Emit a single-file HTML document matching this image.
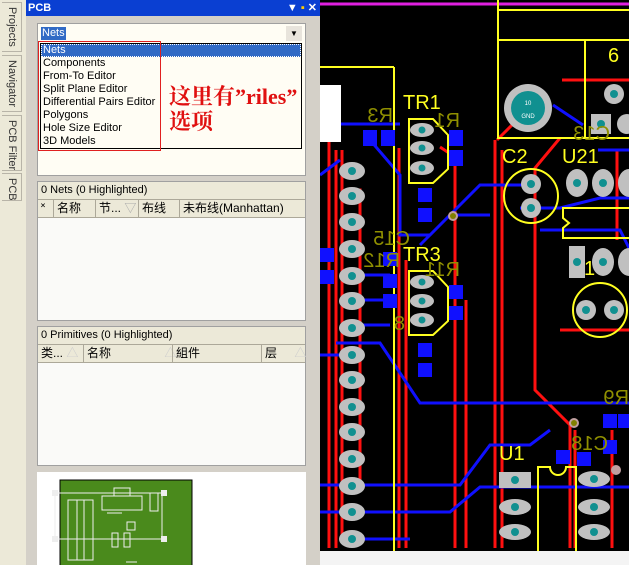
<!DOCTYPE html>
<html><head><meta charset="utf-8"><style>
*{margin:0;padding:0;box-sizing:border-box}
body{width:629px;height:565px;overflow:hidden;position:relative;background:#d4d0c8;font-family:"Liberation Sans","Noto Sans CJK SC",sans-serif;font-size:11px;color:#000}
.a{position:absolute}
.tab{position:absolute;left:2px;width:20px;background:#ece9d8;border:1px solid #b8b4a8;border-left:none}
.tab span{position:absolute;left:4px;top:4px;writing-mode:vertical-rl;font-size:11px;color:#333;white-space:nowrap}
.hdr{background:#ece9d8;border-bottom:1px solid #aca899}
.col{position:absolute;top:0;height:17px;line-height:17px;border-left:1px solid #aca899;padding-left:3px;white-space:nowrap}
</style></head><body>
<div class="a" style="left:0;top:0;width:26px;height:565px;background:#ece9d8"></div>
<div class="tab" style="top:2px;height:50px"><span>Projects</span></div>
<div class="tab" style="top:55px;height:57px"><span>Navigator</span></div>
<div class="tab" style="top:115px;height:56px"><span>PCB Filter</span></div>
<div class="tab" style="top:173px;height:28px"><span>PCB</span></div>
<div class="a" style="left:26px;top:0;width:294px;height:565px;background:#d4d0c8"></div>
<div class="a" style="left:26px;top:0;width:294px;height:16px;background:#0a3fd2;color:#fff;font-weight:bold;font-size:11px;line-height:16px;padding-left:2px">PCB<span style="position:absolute;right:3px;top:0;font-size:11px">▼ <span style="color:#fc0">▪</span> ✕</span></div>
<div class="a" style="left:37px;top:23px;width:269px;height:153px;background:#fffdf4;border:1px solid #a0a0a0"></div>
<div class="a" style="left:38px;top:26px;width:264px;height:16px;background:#fffdf4"></div>
<div class="a" style="left:41px;top:27px;height:13px;background:#316ac5;color:#fff;line-height:13px;padding:0 1px">Nets</div>
<div class="a" style="left:286px;top:26px;width:16px;height:15px;background:#e8e4dc;font-size:8px;text-align:center;line-height:15px">▼</div>
<div class="a" style="left:40px;top:43px;width:262px;height:106px;background:#fffdf4;border:1px solid #000;font-size:11px;line-height:13px">
<div style="background:#316ac5;color:#fff;padding-left:2px;outline:1px dotted #fff;outline-offset:-1px">Nets</div>
<div style="padding-left:2px">Components</div><div style="padding-left:2px">From-To Editor</div><div style="padding-left:2px">Split Plane Editor</div><div style="padding-left:2px">Differential Pairs Editor</div><div style="padding-left:2px">Polygons</div><div style="padding-left:2px">Hole Size Editor</div><div style="padding-left:2px">3D Models</div></div>
<div class="a" style="left:38px;top:41px;width:123px;height:110px;border:1px solid #e02020"></div>
<div class="a" style="left:169px;top:84px;color:#e01010;font-size:22px;line-height:25px;font-weight:bold;font-family:'Liberation Serif','Noto Serif CJK SC',serif;white-space:nowrap">这里有”riles”<br>选项</div>
<div class="a" style="left:37px;top:181px;width:269px;height:140px;background:#fafaf8;border:1px solid #a0a0a0">
<div class="hdr" style="height:18px;line-height:17px;padding-left:3px">0 Nets (0 Highlighted)</div>
<div class="hdr" style="height:18px;position:relative;font-size:12px">
<div class="col" style="left:0;border:none">˟</div><div class="col" style="left:15px">名称</div><div class="col" style="left:57px">节... <span style="color:#aaa">▽</span></div><div class="col" style="left:100px">布线</div><div class="col" style="left:141px">未布线(Manhattan)</div></div></div>
<div class="a" style="left:37px;top:326px;width:269px;height:140px;background:#fafaf8;border:1px solid #a0a0a0">
<div class="hdr" style="height:18px;line-height:17px;padding-left:3px">0 Primitives (0 Highlighted)</div>
<div class="hdr" style="height:18px;position:relative;font-size:12px">
<div class="col" style="left:0;border:none">类... <span style="color:#ccc">△</span></div><div class="col" style="left:45px">名称 <span style="color:#ccc;margin-left:50px">△</span></div><div class="col" style="left:134px">組件</div><div class="col" style="left:223px">层 <span style="color:#ccc;margin-left:14px">△</span></div></div></div>
<div class="a" style="left:37px;top:472px;width:269px;height:93px;background:#fff"></div>
<svg class="a" style="left:52px;top:478px" width="145" height="87">
<rect x="8" y="2" width="132" height="90" fill="#4a8a1c" stroke="#000"/>
<g stroke="#eee" fill="none" stroke-width="1">
<line x1="2" y1="15" x2="115" y2="15"/><line x1="2" y1="61" x2="115" y2="61"/>
<line x1="3" y1="15" x2="3" y2="61"/><line x1="110" y1="15" x2="110" y2="61"/>
<rect x="16" y="22" width="16" height="60"/><rect x="25" y="22" width="16" height="60"/>
<rect x="50" y="18" width="40" height="14"/><rect x="62" y="10" width="16" height="8"/>
<rect x="75" y="44" width="8" height="8"/><rect x="98" y="15" width="8" height="18"/>
<line x1="55" y1="35" x2="70" y2="35"/><rect x="60" y="55" width="6" height="14"/><rect x="72" y="55" width="6" height="14"/>
<line x1="74" y1="84" x2="85" y2="84"/></g>
<rect x="0" y="12" width="6" height="6" fill="#eee"/><rect x="0" y="58" width="6" height="6" fill="#eee"/><rect x="109" y="12" width="6" height="6" fill="#eee"/><rect x="109" y="58" width="6" height="6" fill="#eee"/>
</svg>
<svg class="a" style="left:320px;top:0" width="309" height="565" viewBox="320 0 309 565">
<rect x="320" y="0" width="309" height="565" fill="#000"/>
<rect x="320" y="551" width="309" height="14" fill="#f4f4f4"/>
<line x1="320" y1="4" x2="629" y2="4" stroke="#e020e0" stroke-width="3"/>
<g stroke="#ff1010" stroke-width="3" fill="none">
<line x1="329" y1="135" x2="329" y2="548"/><line x1="336" y1="150" x2="336" y2="548"/>
<path d="M342 150 V540 M350 190 h10 v300"/>
<line x1="399" y1="148" x2="399" y2="548"/><line x1="406" y1="260" x2="406" y2="548"/>
<path d="M440 147 l15 10 V548"/><line x1="466" y1="300" x2="466" y2="548"/>
<line x1="495" y1="140" x2="495" y2="548"/><line x1="502" y1="150" x2="502" y2="548"/>
<path d="M560 138 l-25 30 V390 l35 35 V548"/><path d="M575 430 V548 M612 430 V548"/>
<path d="M562 80 h67 M617 150 V240 M560 330 h69"/>
<path d="M497 140 l30 -30"/>
</g>
<g stroke="#1010ff" stroke-width="3" fill="none">
<path d="M320 175 l20 -15 M340 124 h60 M370 140 l30 35 v60 h30 l20 -20 h40 M420 245 l60 -60 h60"/>
<path d="M320 355 h30 M336 343 h20 M350 343 h30 l40 60 h209"/>
<path d="M320 485 h140 l30 -40 h40 l20 -15 M320 512 h130 l30 -25 h149 M350 539 h60"/>
<path d="M520 208 h40 l40 -10 h29 M540 230 h80 l10 20 M598 150 h31 M583 125 l-30 -20"/>
<path d="M350 275 h40 M350 300 h40 M360 325 h30"/>
</g>
<g stroke="#ffff20" stroke-width="2" fill="none">
<path d="M394 67 H320 M394 67 V551 M498 10 H629 M498 10 V138 H629 M498 40 H629 M585 40 V138 M498 0 v10"/>
<path d="M409 119 h24 l15 16 v34 l-15 14 h-24 z"/><path d="M409 271 h24 l15 16 v34 l-15 14 h-24 z"/>
<circle cx="531" cy="196" r="27"/><circle cx="600" cy="310" r="27"/>
<path d="M629 208 h-66 v10 l6 5 -6 5 v10 h66"/>
<path d="M538 551 V467 h12 a8 8 0 0 0 16 0 h10 V551"/>
</g>
<rect x="320" y="85" width="21" height="57" fill="#fff"/>
<g fill="#c0c0c0">
<ellipse cx="352" cy="171" rx="13" ry="9"/><ellipse cx="352" cy="196" rx="13" ry="9"/><ellipse cx="352" cy="222" rx="13" ry="9"/><ellipse cx="352" cy="249" rx="13" ry="9"/><ellipse cx="352" cy="276" rx="13" ry="9"/><ellipse cx="352" cy="301" rx="13" ry="9"/><ellipse cx="352" cy="328" rx="13" ry="9"/><ellipse cx="352" cy="355" rx="13" ry="9"/><ellipse cx="352" cy="380" rx="13" ry="9"/><ellipse cx="352" cy="407" rx="13" ry="9"/><ellipse cx="352" cy="432" rx="13" ry="9"/><ellipse cx="352" cy="459" rx="13" ry="9"/><ellipse cx="352" cy="486" rx="13" ry="9"/><ellipse cx="352" cy="512" rx="13" ry="9"/><ellipse cx="352" cy="539" rx="13" ry="9"/>
<ellipse cx="422" cy="130" rx="12" ry="7"/><ellipse cx="422" cy="148" rx="12" ry="7"/><ellipse cx="422" cy="168" rx="12" ry="7"/>
<ellipse cx="422" cy="282" rx="12" ry="7"/><ellipse cx="422" cy="301" rx="12" ry="7"/><ellipse cx="422" cy="320" rx="12" ry="7"/>
<circle cx="528" cy="108" r="24"/><circle cx="531" cy="184" r="10"/><circle cx="531" cy="208" r="10"/>
<circle cx="586" cy="310" r="10"/><circle cx="614" cy="310" r="10"/>
<ellipse cx="577" cy="183" rx="11" ry="14"/><ellipse cx="603" cy="183" rx="11" ry="14"/><ellipse cx="629" cy="183" rx="11" ry="14"/>
<rect x="569" y="246" width="16" height="32"/><ellipse cx="603" cy="262" rx="11" ry="14"/><ellipse cx="629" cy="262" rx="11" ry="14"/>
<circle cx="614" cy="94" r="10"/><rect x="591" y="114" width="20" height="20"/><circle cx="627" cy="124" r="10"/>
<rect x="499" y="472" width="32" height="16"/><ellipse cx="515" cy="507" rx="16" ry="8"/><ellipse cx="515" cy="532" rx="16" ry="8"/>
<ellipse cx="594" cy="479" rx="16" ry="8"/><ellipse cx="594" cy="507" rx="16" ry="8"/><ellipse cx="594" cy="532" rx="16" ry="8"/>
</g>
<g fill="#109090">
<circle cx="352" cy="171" r="4"/><circle cx="352" cy="196" r="4"/><circle cx="352" cy="222" r="4"/><circle cx="352" cy="249" r="4"/><circle cx="352" cy="276" r="4"/><circle cx="352" cy="301" r="4"/><circle cx="352" cy="328" r="4"/><circle cx="352" cy="355" r="4"/><circle cx="352" cy="380" r="4"/><circle cx="352" cy="407" r="4"/><circle cx="352" cy="432" r="4"/><circle cx="352" cy="459" r="4"/><circle cx="352" cy="486" r="4"/><circle cx="352" cy="512" r="4"/><circle cx="352" cy="539" r="4"/>
<circle cx="422" cy="130" r="3.5"/><circle cx="422" cy="148" r="3.5"/><circle cx="422" cy="168" r="3.5"/><circle cx="422" cy="282" r="3.5"/><circle cx="422" cy="301" r="3.5"/><circle cx="422" cy="320" r="3.5"/>
<circle cx="528" cy="108" r="17"/><circle cx="531" cy="184" r="4"/><circle cx="531" cy="208" r="4"/><circle cx="586" cy="310" r="4"/><circle cx="614" cy="310" r="4"/>
<circle cx="577" cy="183" r="4"/><circle cx="603" cy="183" r="4"/><circle cx="577" cy="262" r="4"/><circle cx="603" cy="262" r="4"/><circle cx="614" cy="94" r="4"/><circle cx="601" cy="124" r="4"/>
<circle cx="515" cy="480" r="4"/><circle cx="515" cy="507" r="4"/><circle cx="515" cy="532" r="4"/><circle cx="594" cy="479" r="4"/><circle cx="594" cy="507" r="4"/><circle cx="594" cy="532" r="4"/>
</g>
<text x="528" y="105" fill="#fff" font-size="6" text-anchor="middle" font-family="Liberation Sans">10</text>
<text x="528" y="118" fill="#fff" font-size="6" text-anchor="middle" font-family="Liberation Sans">GND</text>
<g fill="#1010ff">
<rect x="363" y="130" width="14" height="16"/><rect x="381" y="130" width="14" height="16"/><rect x="449" y="130" width="14" height="16"/><rect x="449" y="150" width="14" height="16"/>
<rect x="418" y="188" width="14" height="14"/><rect x="418" y="208" width="14" height="14"/>
<rect x="320" y="248" width="14" height="14"/><rect x="320" y="270" width="14" height="14"/><rect x="383" y="252" width="14" height="14"/><rect x="383" y="274" width="14" height="14"/><rect x="383" y="294" width="14" height="14"/>
<rect x="449" y="285" width="14" height="14"/><rect x="449" y="306" width="14" height="14"/><rect x="418" y="343" width="14" height="14"/><rect x="418" y="363" width="14" height="14"/>
<rect x="556" y="450" width="14" height="14"/><rect x="577" y="452" width="14" height="14"/><rect x="603" y="414" width="14" height="14"/><rect x="603" y="440" width="14" height="14"/><rect x="618" y="414" width="11" height="14"/>
</g>
<g fill="#c0a0a0"><circle cx="453" cy="216" r="5"/><circle cx="574" cy="423" r="5"/><circle cx="616" cy="470" r="5"/></g>
<g fill="#808000"><circle cx="453" cy="216" r="3"/><circle cx="574" cy="423" r="3"/></g>
<g fill="#ffff20" font-family="Liberation Sans" font-size="20">
<text x="403" y="109">TR1</text><text x="403" y="261">TR3</text><text x="502" y="163">C2</text><text x="562" y="163">U21</text><text x="499" y="460">U1</text><text x="608" y="62">6</text><text x="584" y="275">1</text>
</g>
<g fill="#909000" font-family="Liberation Sans" font-size="20" transform="scale(-1,1)">
<text x="-393" y="122">R3</text><text x="-460" y="127">R1</text><text x="-410" y="245">C15</text><text x="-400" y="267">R12</text><text x="-460" y="276">R11</text><text x="-405" y="330">8</text><text x="-608" y="450">C18</text><text x="-629" y="404">R9</text><text x="-610" y="140">C13</text>
</g>
</svg>
</body></html>
